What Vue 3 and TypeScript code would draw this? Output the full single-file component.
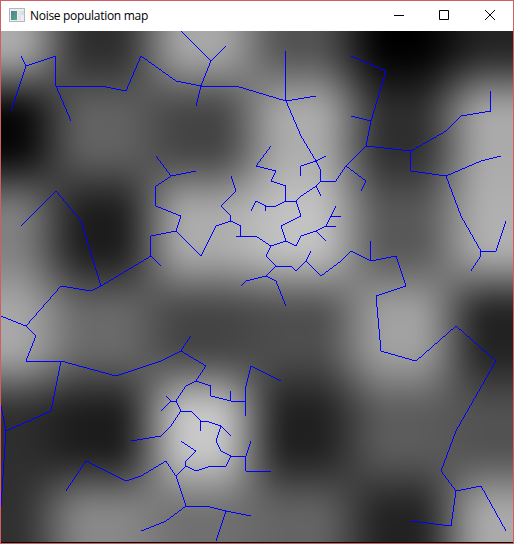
<script setup lang="ts">
import { onMounted, ref } from 'vue'

type Path = number[]

const MAP_WIDTH = 512
const MAP_HEIGHT = 511
const CELL = 100

// Population density at each lattice node, row by row.
const lattice: number[][] = [
  [172, 46, 168, 82, 0, 36, 36],
  [6, 98, 68, 172, 46, 170, 170],
  [128, 28, 172, 194, 88, 176, 176],
  [168, 106, 68, 78, 162, 34, 34],
  [46, 28, 200, 32, 92, 82, 82],
  [48, 136, 112, 100, 34, 170, 170],
  [48, 136, 112, 100, 34, 170, 170],
]

// Roads as x, y pairs on a 5px grid.
const roads: Path[] = [
  [4, 5, 5, 7, 11, 5, 11, 11, 20, 11, 25, 12, 28, 5, 35, 10, 40, 11, 47, 11, 57, 14, 63, 13],
  [5, 7, 2, 16], [11, 11, 14, 18], [40, 11, 39, 15],
  [40, 11, 42, 6, 45, 3], [42, 6, 36, 0], [57, 14, 57, 4],
  [57, 14, 60, 21, 63, 26, 64, 28, 64, 30, 67, 30, 69, 27, 73, 23],
  [65, 25, 63, 26, 60, 27, 60, 29],
  [69, 27, 73, 30, 72, 32],
  [73, 23, 74, 18, 77, 8, 70, 5], [74, 18, 70, 17],
  [73, 23, 82, 24, 89, 20, 92, 17, 98, 16, 98, 12],
  [82, 24, 82, 28, 89, 29, 96, 26, 100, 25],
  [89, 29, 92, 37, 96, 44, 99, 44, 101, 38], [96, 44, 96, 45, 94, 48],
  [64, 30, 63, 31, 60, 33, 59, 34, 57, 34, 55, 35, 53, 35, 51, 34, 50, 36],
  [63, 31, 64, 33], [53, 35, 53, 36],
  [57, 34, 57, 31, 54, 30, 55, 28, 51, 27, 54, 23],
  [59, 34, 60, 37, 56, 39, 57, 42, 59, 43, 60, 41, 63, 40, 65, 39, 66, 37, 67, 35],
  [63, 40, 65, 42], [65, 39, 67, 39], [66, 37, 68, 37],
  [57, 42, 54, 43, 51, 41, 47, 41],
  [48, 41, 48, 39, 46, 38, 46, 37, 44, 35, 47, 32, 46, 29],
  [46, 38, 43, 39, 40, 45, 35, 40, 36, 37, 31, 35, 31, 31, 34, 29, 31, 25],
  [34, 29, 39, 28],
  [35, 40, 30, 41, 30, 45, 20, 51, 18, 52, 12, 51, 5, 59, 0, 57],
  [30, 45, 32, 47], [20, 51, 16, 38, 11, 32, 4, 39],
  [54, 43, 53, 45, 55, 47, 58, 47, 59, 48, 61, 46, 64, 49, 68, 46, 70, 44, 74, 46, 79, 45, 81, 51,
    75, 53, 76, 64, 83, 66, 91, 59, 99, 66, 91, 80, 88, 88, 91, 92, 96, 91, 101, 100],
  [61, 46, 62, 44], [74, 46, 74, 42], [91, 92, 90, 99, 82, 98],
  [55, 47, 53, 49, 49, 50, 48, 51], [53, 49, 55, 50, 57, 55],
  [5, 59, 7, 61, 5, 66, 12, 66, 23, 69, 32, 66, 36, 64, 38, 61],
  [12, 66, 10, 76, 1, 80, 0, 75], [1, 80, 0, 95],
  [36, 64, 41, 67, 39, 70, 42, 71, 42, 73, 46, 74, 49, 74, 49, 77],
  [46, 74, 46, 72], [49, 74, 49, 71, 50, 67, 56, 70],
  [39, 70, 37, 71, 35, 74, 34, 74, 33, 73], [34, 74, 32, 76],
  [35, 74, 36, 76, 34, 79, 32, 81, 26, 82],
  [36, 76, 38, 76, 40, 78, 41, 78, 44, 79, 46, 81], [40, 78, 40, 80],
  [44, 79, 43, 82, 44, 84, 46, 85, 49, 85, 50, 82], [49, 85, 49, 88, 54, 88],
  [46, 85, 45, 87, 42, 87, 39, 88, 37, 87, 35, 89, 33, 86, 28, 89, 25, 90, 17, 86, 13, 92],
  [37, 87, 37, 86, 39, 84, 36, 82],
  [35, 89, 37, 95, 41, 95, 45, 96, 50, 97], [45, 96, 43, 102],
  [37, 95, 33, 98, 28, 100],
]

const canvas = ref<HTMLCanvasElement | null>(null)

const ease = (t: number): number => t * t * t * (t * (t * 6 - 15) + 10)
const mix = (a: number, b: number, t: number): number => a + (b - a) * t

function density(x: number, y: number): number {
  const cx = Math.floor(x / CELL)
  const cy = Math.floor(y / CELL)
  const tx = ease(x / CELL - cx)
  const ty = ease(y / CELL - cy)
  return mix(
    mix(lattice[cy][cx], lattice[cy][cx + 1], tx),
    mix(lattice[cy + 1][cx], lattice[cy + 1][cx + 1], tx),
    ty,
  )
}

function drawSegment(ctx: CanvasRenderingContext2D, x0: number, y0: number, x1: number, y1: number) {
  if (Math.abs(x1 - x0) >= Math.abs(y1 - y0)) {
    const slope = (y1 - y0) / (x1 - x0)
    for (let x = Math.min(x0, x1); x < Math.max(x0, x1); x++) {
      ctx.fillRect(x, Math.floor(y0 + (x + 0.5 - x0) * slope + 1e-6), 1, 1)
    }
  } else {
    const slope = (x1 - x0) / (y1 - y0)
    for (let y = Math.min(y0, y1); y < Math.max(y0, y1); y++) {
      ctx.fillRect(Math.ceil(x0 + (y + 0.5 - y0) * slope - 1e-6) - 1, y, 1, 1)
    }
  }
}

onMounted(() => {
  const ctx = canvas.value?.getContext('2d')
  if (!ctx) return
  const image = ctx.createImageData(MAP_WIDTH, MAP_HEIGHT)
  for (let y = 0; y < MAP_HEIGHT; y++) {
    for (let x = 0; x < MAP_WIDTH; x++) {
      const v = Math.round(density(x, y))
      image.data.set([v, v, v, 255], (y * MAP_WIDTH + x) * 4)
    }
  }
  ctx.putImageData(image, 0, 0)
  ctx.fillStyle = '#0000ff'
  for (const road of roads) {
    for (let i = 0; i + 3 < road.length; i += 2) {
      drawSegment(ctx, road[i] * 5, road[i + 1] * 5, road[i + 2] * 5, road[i + 3] * 5)
    }
  }
})
</script>

<template>
  <main class="window">
    <header class="titlebar">
      <svg class="app-icon" width="16" height="14" viewBox="0 0 16 14" shape-rendering="crispEdges">
        <defs>
          <linearGradient id="pane" x1="0" y1="0" x2="1" y2="1">
            <stop offset="0" stop-color="#4a7fa5" />
            <stop offset="1" stop-color="#55a878" />
          </linearGradient>
        </defs>
        <rect width="16" height="14" fill="#b4b8bc" />
        <rect x="1" y="1" width="14" height="12" fill="#eceef0" />
        <rect x="2" y="3" width="6" height="9" fill="url(#pane)" />
        <rect x="9" y="3" width="3" height="9" fill="#e2e5ee" />
        <rect x="12" y="3" width="3" height="4" fill="#cfe4da" />
      </svg>
      <h1 class="title">Noise population map</h1>
      <div class="controls">
        <button class="control minimize" aria-label="Minimize">
          <svg width="10" height="10" viewBox="0 0 10 10"><path d="M0 5.5H10" /></svg>
        </button>
        <button class="control maximize" aria-label="Maximize">
          <svg width="10" height="10" viewBox="0 0 10 10"><path d="M.5 .5H9.5V9.5H.5Z" /></svg>
        </button>
        <button class="control" aria-label="Close">
          <svg width="10" height="10" viewBox="0 0 10 10"><path d="M0 0L10 10M10 0L0 10" /></svg>
        </button>
      </div>
    </header>
    <canvas ref="canvas" class="map" :width="MAP_WIDTH" :height="MAP_HEIGHT"></canvas>
  </main>
</template>

<style>
body {
  margin: 0;
}
</style>

<style scoped>
.window {
  display: flex;
  flex-direction: column;
  box-sizing: border-box;
  width: 514px;
  height: 544px;
  border: 1px solid #cf5f61;
  background: #000;
  overflow: hidden;
}
.titlebar {
  display: flex;
  flex: none;
  align-items: center;
  height: 30px;
  background: #fff;
}
.app-icon {
  margin: 0 5px 2px 8px;
}
.title {
  margin: 0;
  color: #000;
  font: 400 12px/16px "Open Sans", "Noto Sans", sans-serif;
  letter-spacing: -0.3px;
  white-space: nowrap;
}
.controls {
  display: flex;
  margin-left: auto;
}
.control {
  display: flex;
  align-items: center;
  justify-content: center;
  width: 46px;
  height: 28px;
  margin: 0 0 2px;
  padding: 0;
  border: 0;
  background: none;
}
.minimize {
  width: 44px;
}
.control path {
  fill: none;
  stroke: #000;
  stroke-width: 1;
}
.map {
  display: block;
  flex: none;
}
</style>
